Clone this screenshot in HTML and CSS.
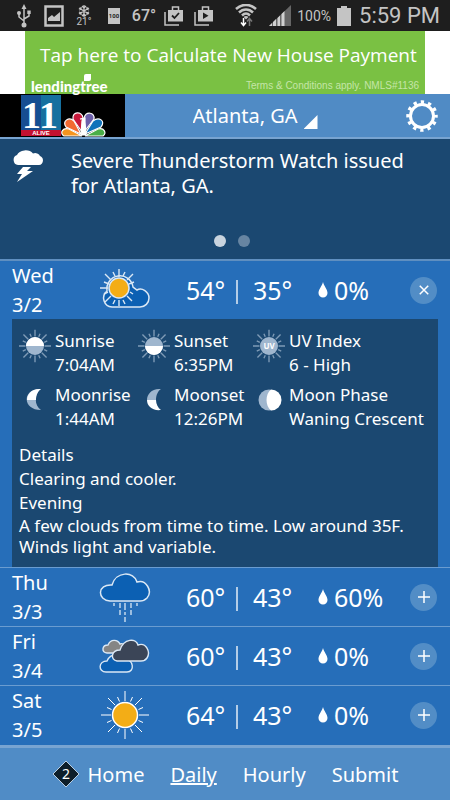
FILE: index.html
```
<!DOCTYPE html>
<html lang="en">
<head>
    <meta charset="UTF-8">
    <meta name="viewport" content="width=device-width, initial-scale=1">
    <title>11 Alive Weather</title>
    <link rel="stylesheet" href="styles.css">
</head>
<body>
    <!-- Shared shapes -->
    <svg class="sprite" aria-hidden="true">
        <symbol id="rays" viewBox="0 0 50 50">
            <g fill="none" stroke="currentColor">
                <path d="M25 1V11M25 39V49M1 25H11M39 25H49M8 8L15 15M35 35L42 42M42 8L35 15M15 35L8 42"/>
                <path d="M17.5 7L19.5 11.5M32.5 7L30.5 11.5M17.5 43L19.5 38.5M32.5 43L30.5 38.5M7 17.5L11.5 19.5M7 32.5L11.5 30.5M43 17.5L38.5 19.5M43 32.5L38.5 30.5"/>
            </g>
        </symbol>
        <symbol id="drop" viewBox="0 0 10 16">
            <path fill="#fff" d="M5 0C6 4 9.5 7.500 9.500 11A4.500 4.500 0 0 1 .5 11C.5 7.500 4 4 5 0Z"/>
        </symbol>
        <symbol id="plus" viewBox="0 0 14 14">
            <path stroke="#fff" stroke-width="1.500" d="M7 1V13M1 7H13"/>
        </symbol>
    </svg>

    <div class="status-bar">
        <div class="status-left">
            <span class="status-cell">
                <svg width="14" height="24" viewBox="0 0 14 24" fill="none" stroke="#c4c4c4" stroke-width="1.500">
                    <path d="M7 4V20M7 17L2 13V9M7 15L12 12V9"/>
                    <path fill="#c4c4c4" stroke="none" d="M7 0L9.500 5H4.500ZM10.300 6.500H13.700V10H10.300Z"/>
                    <circle cx="2" cy="9" r="2" fill="#c4c4c4" stroke="none"/>
                    <circle cx="7" cy="21" r="2.500" fill="#c4c4c4" stroke="none"/>
                </svg>
            </span>
            <span class="status-cell">
                <svg width="20" height="22" viewBox="0 0 20 22">
                    <path fill="none" stroke="#c4c4c4" stroke-width="2.500" d="M1.500 1.500H18.500V20.500H1.500Z"/>
                    <path fill="#c4c4c4" d="M4 16V13L8 10L10 12L16 7V16Z"/>
                </svg>
            </span>
            <span class="status-cell status-snow">
                <svg width="12" height="12" viewBox="0 0 12 12" fill="none" stroke="#c4c4c4" stroke-width="1.300">
                    <path d="M6 0V12M1 3L11 9M11 3L1 9M4 1L6 3L8 1M4 11L6 9L8 11M1 5L3 4V2M11 7L9 8V10M11 5L9 4V2M1 7L3 8V10"/>
                </svg>
                <span>21°</span>
            </span>
            <span class="status-cell">
                <span class="battery-badge">100</span>
            </span>
            <span class="status-cell status-temp">67°</span>
            <span class="status-cell">
                <svg width="20" height="20" viewBox="0 0 20 20">
                    <path fill="none" stroke="#c4c4c4" stroke-width="1.500" d="M1 6V19H15"/>
                    <path fill="none" stroke="#c4c4c4" stroke-width="1.500" d="M8.500 4V1H14.500V4"/>
                    <path fill="#c4c4c4" d="M4 4H19V15.500H4Z"/>
                    <path fill="none" stroke="#1e1e1e" stroke-width="1.800" d="M8 9.500L10.500 12L15 7"/>
                </svg>
            </span>
            <span class="status-cell">
                <svg width="20" height="20" viewBox="0 0 20 20">
                    <path fill="none" stroke="#c4c4c4" stroke-width="1.500" d="M1 6V19H15"/>
                    <path fill="none" stroke="#c4c4c4" stroke-width="1.500" d="M8.500 4V1H14.500V4"/>
                    <path fill="#c4c4c4" d="M4 4H19V15.500H4Z"/>
                    <path fill="#1e1e1e" d="M9 6.500L14.500 9.800L9 13Z"/>
                </svg>
            </span>
        </div>
        <div class="status-right">
            <svg width="22" height="24" viewBox="0 0 22 24" fill="none" stroke="#c4c4c4" stroke-width="2.500">
                <path d="M1 5C7-.5 15-.5 21 5M4 8.500C8 4.500 14 4.500 18 8.500M7 11.500C9.500 9 12.500 9 15 11.500"/>
                <path fill="#c4c4c4" stroke="none" d="M8.500 13C10 11.500 12 11.500 13.500 13L11 15.500Z"/>
                <path stroke="#fff" stroke-width="1.500" d="M8.500 14V21M6 18.500L8.500 21.500L11 18.500"/>
                <path stroke="#777" stroke-width="1.500" d="M14.500 22V15M12 17.500L14.500 14.500L17 17.500"/>
            </svg>
            <svg class="signal" width="22" height="21" viewBox="0 0 22 21">
                <path fill="#666" d="M0 21L22 0V21Z"/>
                <path fill="#d0d0d0" d="M0 21L3 18V21ZM4 21V17L7 14V21ZM8.500 21V13L11 10.500V21ZM12.500 21V9L15.500 6V21Z"/>
            </svg>
            <span class="charge">100%</span>
            <svg class="battery" width="14" height="20" viewBox="0 0 14 20">
                <path fill="#c4c4c4" d="M4 0H10V2H14V20H0V2H4Z"/>
            </svg>
            <span class="clock">5:59 PM</span>
        </div>
    </div>

    <a class="ad" href="#">
        <span class="ad-title">Tap here to Calculate New House Payment</span>
        <span class="ad-footer">
            <span class="ad-brand">lendingtree<span class="leaf"></span></span>
            <span class="ad-terms">Terms &amp; Conditions apply. NMLS#1136</span>
        </span>
    </a>

    <header class="header">
        <div class="logo">
            <svg width="88" height="43" viewBox="0 0 88 43" role="img" aria-label="11 Alive NBC">
                <rect x="1" y="1" width="20" height="37" fill="#164e92"/>
                <rect x="21" y="1" width="20" height="37" fill="#16709f"/>
                <rect x="1" y="36" width="40" height="6" fill="#c41230"/>
                <text class="logo-number" x="2" y="34">11</text>
                <text class="logo-alive" x="21" y="41">ALIVE</text>
                <g stroke="#fff" stroke-width="1.200">
                    <path fill="#f5941e" d="M62 42H44C39 39 43 33 49 35Z"/>
                    <path fill="#f26a30" d="M61 40L46 33C42 27 49 22 54 27Z"/>
                    <path fill="#c8193c" d="M62 38L53 25C52 17 62 17 63 24Z"/>
                    <path fill="#6c5fab" d="M64 38L64 24C66 17 75 18 74 25Z"/>
                    <path fill="#0f72ba" d="M65 40L73 27C79 22 86 27 81 33Z"/>
                    <path fill="#4aae48" d="M65 42L78 35C84 33 87 39 83 42Z"/>
                    <path fill="#fff" d="M61 41L62 27L63 25H60L65 24V28L66 41Z"/>
                </g>
            </svg>
        </div>
        <div class="location">
            <select aria-label="Location">
                <option>Atlanta, GA</option>
            </select>
            <span class="corner"></span>
        </div>
        <button class="settings" aria-label="Settings">
            <svg width="32" height="32" viewBox="0 0 32 32" fill="none" stroke="#fff">
                <circle cx="16" cy="16" r="11.500" stroke-width="3"/>
                <circle cx="16" cy="16" r="14" stroke-width="3.500" stroke-dasharray="3.300 4.030" stroke-dashoffset="1.650"/>
            </svg>
        </button>
    </header>

    <section class="alert">
        <div class="alert-body">
            <svg width="34" height="34" viewBox="0 0 34 34" fill="#fff">
                <path d="M6 15A5.200 5.200 0 0 1 5 5A9 7 0 0 1 21 3.500A5 4 0 0 1 28 6A4.700 4.700 0 0 1 27 15Z"/>
                <path d="M11 17H19L15 21H21L5 32L10 24H5Z"/>
            </svg>
            <p>Severe Thunderstorm Watch issued for Atlanta, GA.</p>
        </div>
        <div class="dots">
            <button class="dot active" aria-label="Alert 1"></button>
            <button class="dot" aria-label="Alert 2"></button>
        </div>
    </section>

    <main class="forecast">
        <article class="day">
            <div class="day-row">
                <div class="date">Wed<br>3/2</div>
                <svg class="weather" width="52" height="50" viewBox="0 0 52 50" fill="none" stroke="#dbe8f5">
                    <path fill="#0c60b3" stroke-width="1.500" d="M13 42A9 9 0 0 1 8 26A11 11 0 0 1 34 22L38 25C43 22 50 27 50 33A9 9 0 0 1 41 42Z"/>
                    <path stroke-width="1.400" d="M20 4V12M20 35V41M1 23H9M6 9L12 15M34 9L28 15M12 31L6 37M28 31L33 36M14 7L16 11M26 7L24 11M5 17L10 19M35 17L30 19M5 29L9 27M34 29L31 27M14 39L16 35M26 39L24 35"/>
                    <circle cx="20" cy="23" r="10" fill="#f3ad16" stroke-width="1.500"/>
                </svg>
                <span class="high">54°</span>
                <span class="divider"></span>
                <span class="low">35°</span>
                <span class="rain"><svg width="10" height="16"><use href="#drop"/></svg>0%</span>
                <button class="toggle" aria-label="Close Wed" aria-expanded="true">
                    <svg class="cross" width="14" height="14"><use href="#plus"/></svg>
                </button>
            </div>
            <div class="details">
                <div class="astro">
                    <div class="astro-item">
                        <svg width="32" height="34" viewBox="0 0 32 34">
                            <use href="#rays" class="faint" x="-1" y="0" width="34" height="34"/>
                            <circle cx="16" cy="17" r="9" fill="#9fb6ce"/>
                            <path fill="#fff" d="M7 17A9 9 0 0 1 25 17Z"/>
                        </svg>
                        <span>Sunrise<br>7:04AM</span>
                    </div>
                    <div class="astro-item">
                        <svg width="32" height="34" viewBox="0 0 32 34">
                            <use href="#rays" class="faint" x="-1" y="0" width="34" height="34"/>
                            <circle cx="16" cy="17" r="9" fill="#9fb6ce"/>
                            <path fill="#fff" d="M7 17A9 9 0 0 0 25 17Z"/>
                        </svg>
                        <span>Sunset<br>6:35PM</span>
                    </div>
                    <div class="astro-item">
                        <svg width="32" height="34" viewBox="0 0 32 34">
                            <use href="#rays" class="faint" x="-1" y="0" width="34" height="34"/>
                            <circle cx="16" cy="17" r="9" fill="#9fb6ce"/>
                            <text class="uv" x="16" y="20">UV</text>
                        </svg>
                        <span>UV Index<br>6 - High</span>
                    </div>
                    <div class="astro-item">
                        <svg width="32" height="34" viewBox="0 0 32 34">
                            <path fill="#9fb6ce" d="M22 6C3 5 3 27 22 27C15 23 15 10 22 6Z"/>
                            <path fill="#fff" d="M22 6C13 5 8 11 8 17H17C17 12 19 8 22 6Z"/>
                        </svg>
                        <span>Moonrise<br>1:44AM</span>
                    </div>
                    <div class="astro-item">
                        <svg width="32" height="34" viewBox="0 0 32 34">
                            <path fill="#9fb6ce" d="M23 6C14 5 9 11 9 17H18C18 12 20 8 23 6Z"/>
                            <path fill="#fff" d="M9 17C9 23 14 28 23 27C20 25 18 21 18 17Z"/>
                        </svg>
                        <span>Moonset<br>12:26PM</span>
                    </div>
                    <div class="astro-item">
                        <svg width="32" height="34" viewBox="0 0 32 34">
                            <circle cx="16" cy="17" r="10.500" fill="#9fb6ce"/>
                            <path fill="#fff" d="M18 6.500A10.500 10.500 0 0 1 18 27.500C12 23 12 11 18 6.500Z"/>
                        </svg>
                        <span>Moon Phase<br>Waning Crescent</span>
                    </div>
                </div>
                <div class="summary">
                    <h3>Details</h3>
                    <h3>Clearing and cooler.</h3>
                    <h3>Evening</h3>
                    <p>A few clouds from time to time. Low around 35F. Winds light and variable.</p>
                </div>
            </div>
        </article>

        <article class="day">
            <div class="day-row">
                <div class="date">Thu<br>3/3</div>
                <svg class="weather" width="52" height="50" viewBox="0 0 52 50" fill="none" stroke="#dbe8f5">
                    <path fill="#0c60b3" stroke-width="1.500" d="M11 29C-2 28-2 12 13 13C17-1 35-1 38 10C47 7 54 19 48 26Q45 29 41 29Z"/>
                    <path stroke-width="1.300" d="M15 31V34M21 31V36M26 31V38M32 31V36M38 31V34M21 38V43M26 40V43M32 38V43M26 45V50"/>
                </svg>
                <span class="high">60°</span>
                <span class="divider"></span>
                <span class="low">43°</span>
                <span class="rain"><svg width="10" height="16"><use href="#drop"/></svg>60%</span>
                <button class="toggle" aria-label="Open Thu" aria-expanded="false">
                    <svg width="14" height="14"><use href="#plus"/></svg>
                </button>
            </div>
        </article>

        <article class="day">
            <div class="day-row">
                <div class="date">Fri<br>3/4</div>
                <svg class="weather" width="52" height="50" viewBox="0 0 52 50" fill="none" stroke="#dbe8f5" stroke-width="1.400">
                    <path fill="#0c60b3" d="M7 41C-1 41-1 30 8 30C12 21 22 23 25 28C35 28 36 41 28 41Z"/>
                    <path fill="#858585" d="M8 22C2 21 3 14 9 14C12 7 19 9 21 13C26 11 28 18 24 22Z"/>
                    <path fill="#3b4557" d="M18 30C11 29 12 19 21 19C25 7 37 7 39 14C47 11 52 21 48 27Q46 30 42 30Z"/>
                </svg>
                <span class="high">60°</span>
                <span class="divider"></span>
                <span class="low">43°</span>
                <span class="rain"><svg width="10" height="16"><use href="#drop"/></svg>0%</span>
                <button class="toggle" aria-label="Open Fri" aria-expanded="false">
                    <svg width="14" height="14"><use href="#plus"/></svg>
                </button>
            </div>
        </article>

        <article class="day">
            <div class="day-row">
                <div class="date">Sat<br>3/5</div>
                <svg class="weather" width="52" height="50" viewBox="0 0 52 50">
                    <use href="#rays" class="bright" x="1" y="0" width="50" height="50"/>
                    <circle cx="26" cy="25" r="12.500" fill="#f3ad16" stroke="#fff" stroke-width="1.500"/>
                </svg>
                <span class="high">64°</span>
                <span class="divider"></span>
                <span class="low">43°</span>
                <span class="rain"><svg width="10" height="16"><use href="#drop"/></svg>0%</span>
                <button class="toggle" aria-label="Open Sat" aria-expanded="false">
                    <svg width="14" height="14"><use href="#plus"/></svg>
                </button>
            </div>
        </article>
    </main>

    <nav class="tabs">
        <a href="#home">
            <svg width="28" height="28" viewBox="0 0 28 28">
                <path fill="#0e1f2b" stroke="#b9cee2" d="M14 1L27 14L14 27L1 14Z"/>
                <text class="count" x="14" y="19">2</text>
            </svg>
            <span>Home</span>
        </a>
        <a href="#daily" class="current">Daily</a>
        <a href="#hourly">Hourly</a>
        <a href="#submit">Submit</a>
    </nav>
</body>
</html>
```
FILE: styles.css
```
* {
    box-sizing: border-box;
}

body {
    display: flex;
    flex-direction: column;
    min-height: 100vh;
    margin: 0;
    background-color: #266eb9;
    color: #fff;
    font-family: "Noto Sans", "Open Sans", sans-serif;
}

button, select {
    padding: 0;
    border: none;
    background: none;
    color: inherit;
    font-family: inherit;
    cursor: pointer;
}

a {
    color: inherit;
    text-decoration: none;
}

p, h3 {
    margin: 0;
}

svg {
    flex-shrink: 0;
}

.sprite {
    position: absolute;
    width: 0;
    height: 0;
}

/* Status bar */
.status-bar {
    display: flex;
    justify-content: space-between;
    height: 31px;
    padding: 0 10px 0 9px;
    background-color: #1e1e1e;
    color: #c4c4c4;
    font-family: Roboto, sans-serif;
}

.status-left, .status-right {
    display: flex;
    align-items: center;
}

.status-cell {
    display: flex;
    justify-content: center;
    align-items: center;
    width: 30px;
}

.status-snow {
    flex-direction: column;
    font-size: 10px;
    line-height: 10px;
}

.battery-badge {
    width: 12px;
    height: 16px;
    background-color: #c4c4c4;
    color: #1e1e1e;
    font-size: 6px;
    font-weight: bold;
    line-height: 16px;
    text-align: center;
}

.status-temp {
    font-size: 16px;
    font-weight: 500;
}

.signal {
    margin: 0 6px 0 12px;
}

.charge {
    font-size: 14px;
}

.battery {
    margin: 0 8px 0 6px;
}

.clock {
    font-size: 22px;
}

/* Ad banner */
.ad {
    display: flex;
    flex-direction: column;
    justify-content: space-between;
    height: 63px;
    padding: 10px 6px 0 6px;
    border: solid #fff;
    border-width: 0 25px;
    background-color: #7ac143;
    font-family: "Open Sans", sans-serif;
}

.ad-title {
    padding-left: 9px;
    font-size: 19px;
    line-height: 28px;
    white-space: nowrap;
}

.ad-footer {
    display: flex;
    justify-content: space-between;
    align-items: center;
    line-height: 16px;
}

.ad-brand {
    position: relative;
    font-family: Lato, sans-serif;
    font-size: 15px;
    font-weight: 900;
}

.leaf {
    position: absolute;
    top: -4px;
    right: 17px;
    width: 7px;
    height: 7px;
    border-radius: 2px 0;
    background-color: #fff;
}

.ad-terms {
    color: #c5e5a8;
    font-family: "Liberation Sans", sans-serif;
    font-size: 10px;
}

/* Header */
.header {
    display: flex;
    height: 45px;
    border-bottom: 2px solid #78a4d1;
    background-color: #508bc5;
}

.logo {
    width: 125px;
    padding-left: 20px;
    background-color: #000;
}

.logo-number {
    fill: #fff;
    font-family: "Liberation Serif", serif;
    font-size: 38px;
    font-weight: bold;
}

.logo-alive {
    fill: #fff;
    font-family: "Liberation Sans", sans-serif;
    font-size: 6px;
    font-weight: bold;
    text-anchor: middle;
}

.location {
    flex: 1;
    display: flex;
    justify-content: center;
    align-items: center;
    gap: 5px;
    padding-right: 21px;
}

.location select {
    appearance: none;
    font-size: 20px;
}

.corner {
    align-self: flex-end;
    width: 14px;
    height: 14px;
    margin-bottom: 8px;
    background-color: #fff;
    clip-path: polygon(100% 0, 100% 100%, 0 100%);
}

.settings {
    display: flex;
    align-items: center;
    padding-right: 12px;
}

/* Alert */
.alert {
    display: flex;
    flex-direction: column;
    justify-content: space-between;
    height: 122px;
    padding: 9px 12px 12px;
    border-bottom: 2px solid #5f8fc0;
    background-color: #1b4871;
}

.alert-body {
    display: flex;
    gap: 25px;
    padding-right: 24px;
    font-size: 20px;
    line-height: 25px;
}

.alert-body svg {
    margin-top: 2px;
}

.dots {
    display: flex;
    justify-content: center;
    gap: 12px;
    padding-left: 14px;
}

.dot {
    width: 12px;
    height: 12px;
    border-radius: 50%;
    background-color: #6785a2;
}

.dot.active {
    background-color: #c9d4df;
}

/* Forecast */
.day + .day {
    border-top: 1px solid #6a9cd0;
}

.day-row {
    display: grid;
    grid-template-columns: 87px 87px 50px 17px 65px 1fr auto;
    align-items: center;
    padding: 0 13px 0 12px;
    font-size: 25px;
}

.date {
    font-size: 20px;
    line-height: 29px;
}

.divider {
    width: 2px;
    height: 24px;
    margin-top: 4px;
    background-color: #b4cde7;
}

.rain {
    display: flex;
    align-items: center;
    gap: 6px;
}

.toggle {
    display: flex;
    justify-content: center;
    align-items: center;
    width: 27px;
    height: 27px;
    border-radius: 50%;
    background-color: #528dc6;
}

.cross {
    transform: rotate(45deg);
}

.bright {
    color: #fff;
}

.faint {
    color: #7f9bb6;
    stroke-width: 2;
}

.details {
    margin: 0 12px;
    padding: 10px 7px;
    background-color: #1b4871;
    font-size: 17px;
    line-height: 24px;
}

.astro {
    display: grid;
    grid-template-columns: 119px 115px 1fr;
    row-gap: 6px;
    margin-bottom: 12px;
}

.astro-item {
    display: flex;
    gap: 4px;
    white-space: nowrap;
}

.uv {
    fill: #fff;
    font-size: 8px;
    font-weight: bold;
    text-anchor: middle;
}

.summary h3 {
    font-size: 17px;
    font-weight: normal;
}

.summary p {
    line-height: 21px;
}

/* Bottom tabs */
.tabs {
    display: flex;
    justify-content: center;
    align-items: center;
    gap: 26px;
    height: 55px;
    margin-top: auto;
    border-top: 3px solid #78a4d1;
    background-color: #508cc6;
    font-size: 20px;
}

.tabs a {
    display: flex;
    align-items: center;
    gap: 8px;
}

.tabs .current {
    text-decoration: underline;
}

.count {
    fill: #fff;
    font-size: 14px;
    text-anchor: middle;
}
```
